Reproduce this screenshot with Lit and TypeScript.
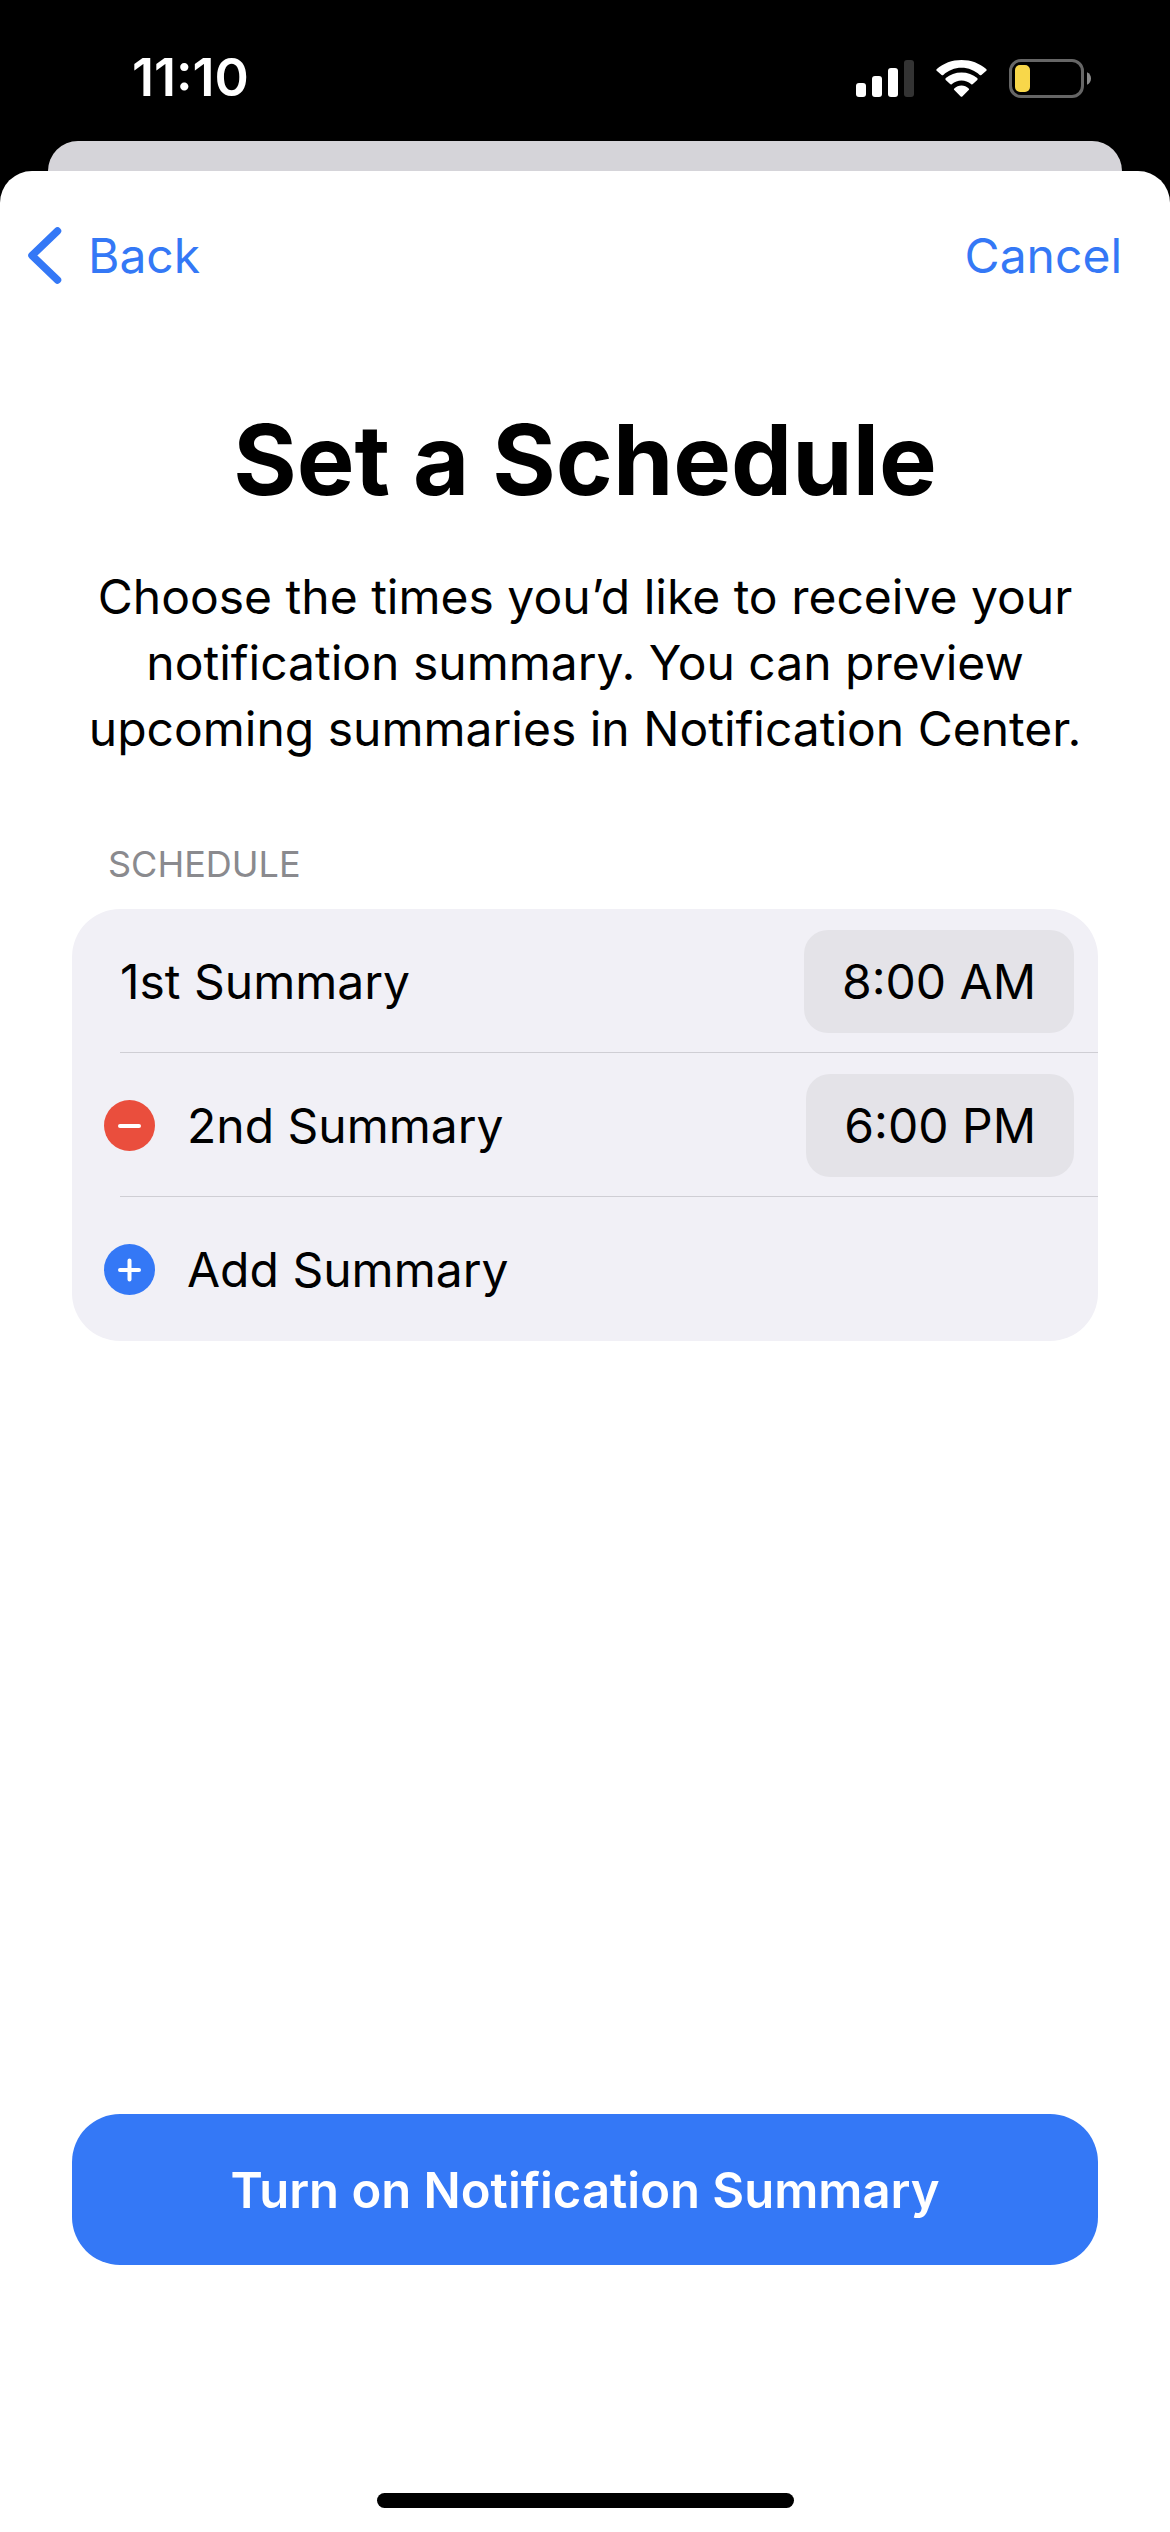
import { LitElement, html, css, svg, nothing } from "lit";
import { customElement, property, state } from "lit/decorators.js";

interface Summary {
  label: string;
  time: string;
  removable: boolean;
}

@customElement("status-bar")
class StatusBar extends LitElement {
  static styles = css`
    :host {
      display: block;
    }
    .bar {
      box-sizing: border-box;
      display: flex;
      align-items: center;
      justify-content: space-between;
      height: 141px;
      padding: 15px 78px 0 132px;
      color: #fff;
    }
    .time {
      font-size: 52px;
      line-height: 66px;
      font-weight: 600;
    }
    .icons {
      display: flex;
      align-items: center;
      gap: 22px;
    }
    svg {
      display: block;
    }
  `;

  render() {
    const bars = [
      [0, 23, 14],
      [16, 16, 21],
      [32, 8, 29],
      [48, 0, 37],
    ];
    return html`
      <div class="bar">
        <span class="time">11:10</span>
        <div class="icons">
          <svg width="58" height="37" viewBox="0 0 58 37" role="img" aria-label="Signal">
            ${bars.map(
              ([x, y, h], i) => svg`<rect x=${x} y=${y} width="10" height=${h} rx="3" fill=${i < 3 ? "#fff" : "#333"} />`
            )}
          </svg>
          <svg width="51" height="37" viewBox="0 0 51 37" role="img" aria-label="Wi-Fi" fill="#fff">
            <path d="M25.500 7.700C32.400 7.700 38.800 10.400 43.700 14.900Q44.600 15.700 45.400 14.900L50.300 10.800Q51.100 10 50.200 9.100C43.600 3.300 34.900 0 25.500 0C16.100 0 7.400 3.300 .8 9.100Q-.1 10 .7 10.800L5.600 14.900Q6.400 15.700 7.300 14.900C12.200 10.400 18.600 7.700 25.500 7.700Z" />
            <path d="M25.500 20.400C29.100 20.400 32.400 21.700 35 23.900Q36 24.900 36.900 24L41.300 19.900Q42.100 19 41.200 18.100C37 14.500 31.500 12.500 25.500 12.500C19.500 12.500 14 14.500 9.800 18.100Q8.900 19 9.700 19.900L14.100 24Q15 24.900 16 23.900C18.600 21.700 21.900 20.400 25.500 20.400Z" />
            <path d="M32.700 28.400Q33.500 29.300 32.700 30.100L26.300 36.400Q25.500 37.200 24.700 36.400L18.300 30.100Q17.500 29.300 18.300 28.400C20.300 26.700 22.800 25.600 25.500 25.600C28.200 25.600 30.700 26.700 32.700 28.400Z" />
          </svg>
          <svg width="83" height="39" viewBox="0 0 83 39" role="img" aria-label="Battery low">
            <rect x="1.500" y="1.500" width="72" height="36" rx="10.500" fill="none" stroke="#666" stroke-width="3" />
            <rect x="6" y="6" width="15" height="27" rx="5" fill="#f8d74a" />
            <path d="M78 13.200C80.600 14.300 82 16.700 82 19.500C82 22.300 80.600 24.700 78 25.800Z" fill="#8a8a8a" />
          </svg>
        </div>
      </div>
    `;
  }
}

@customElement("summary-row")
class SummaryRow extends LitElement {
  @property() label = "";
  @property() time = "";
  @property({ type: Boolean }) removable = false;

  static styles = css`
    :host {
      display: block;
    }
    .row {
      box-sizing: border-box;
      display: flex;
      align-items: center;
      min-height: 144px;
      padding: 0 24px 0 48px;
    }
    .row.removable {
      padding-left: 32px;
    }
    .name {
      flex: 1;
      padding-top: 2px;
      font-size: 48px;
      line-height: 66px;
    }
    button {
      margin: 0;
      padding: 0;
      border: 0;
      background: none;
      color: inherit;
      font: inherit;
      cursor: pointer;
    }
    .remove {
      display: block;
      margin-right: 32px;
    }
    .remove svg {
      display: block;
    }
    .time {
      height: 103px;
      padding: 2px 38px 0;
      border-radius: 24px;
      background: #e4e3e8;
      font-size: 48px;
      line-height: 66px;
    }
  `;

  private remove() {
    this.dispatchEvent(new CustomEvent("remove-summary"));
  }

  render() {
    return html`
      <div class="row ${this.removable ? "removable" : ""}">
        ${this.removable
          ? html`<button class="remove" aria-label="Remove ${this.label}" @click=${this.remove}>
              <svg width="51" height="51" viewBox="0 0 51 51">
                <circle cx="25.500" cy="25.500" r="25.500" fill="#ea4e3d" />
                <path d="M16 26H35" stroke="#fff" stroke-width="4" stroke-linecap="round" />
              </svg>
            </button>`
          : nothing}
        <span class="name" id="name">${this.label}</span>
        <button class="time" aria-describedby="name">${this.time}</button>
      </div>
    `;
  }
}

@customElement("app-root")
class AppRoot extends LitElement {
  @state() private summaries: Summary[] = [
    { label: "1st Summary", time: "8:00 AM", removable: false },
    { label: "2nd Summary", time: "6:00 PM", removable: true },
  ];

  static styles = css`
    :host {
      display: flex;
      flex-direction: column;
      min-height: 100vh;
      background: #000;
      color: #000;
      font-family: Inter, "Liberation Sans", sans-serif;
    }
    button {
      margin: 0;
      padding: 0;
      border: 0;
      background: none;
      color: inherit;
      font: inherit;
      cursor: pointer;
    }
    svg {
      display: block;
    }
    .behind {
      height: 30px;
      margin: 0 48px;
      border-radius: 30px 30px 0 0;
      background: #d5d4d9;
    }
    .sheet {
      flex: 1;
      display: flex;
      flex-direction: column;
      border-radius: 32px 32px 0 0;
      background: #fff;
    }
    .nav {
      display: flex;
      align-items: center;
      justify-content: space-between;
      height: 168px;
      padding: 0 48px 0 28px;
      color: #3478f6;
      font-size: 48px;
      line-height: 66px;
    }
    .back {
      display: flex;
      align-items: center;
      gap: 26px;
    }
    .label {
      display: block;
      padding-top: 2px;
    }
    .content {
      flex: 1;
      display: flex;
      flex-direction: column;
      padding: 61px 72px 0;
    }
    .title {
      margin: 0;
      font-size: 97px;
      line-height: 120px;
      font-weight: 700;
      text-align: center;
    }
    .intro {
      margin: 44px 0 0;
      font-size: 48px;
      line-height: 66px;
      text-align: center;
    }
    .caption {
      margin: 81px 0 24px;
      padding: 0 36px;
      color: #8a8a8e;
      font-size: 36px;
      line-height: 42px;
      font-weight: 400;
    }
    .card {
      margin: 0;
      padding: 0;
      list-style: none;
      border-radius: 48px;
      background: #f1f0f6;
    }
    .item {
      background: linear-gradient(#cfced4, #cfced4) right bottom / calc(100% - 48px) 1px no-repeat;
    }
    .item:last-child {
      background: none;
    }
    .add {
      display: flex;
      align-items: center;
      gap: 32px;
      width: 100%;
      min-height: 144px;
      padding: 0 32px;
      font-size: 48px;
      line-height: 66px;
      text-align: left;
    }
    .primary {
      height: 151px;
      margin-top: auto;
      border-radius: 48px;
      background: #3478f6;
      color: #fff;
      font-size: 49px;
      line-height: 66px;
      font-weight: 600;
    }
    .home {
      width: 417px;
      height: 15px;
      margin: 228px auto 24px;
      border-radius: 8px;
      background: #000;
    }
  `;

  private removeAt(index: number) {
    this.summaries = this.summaries.filter((_, i) => i !== index);
  }

  render() {
    return html`
      <status-bar></status-bar>
      <div class="behind"></div>
      <main class="sheet">
        <nav class="nav">
          <button class="back">
            <svg width="34" height="57" viewBox="0 0 34 57" aria-hidden="true">
              <path d="M29.500 4L4 28.500L29.500 53" fill="none" stroke="#3478f6" stroke-width="7.500" stroke-linecap="round" stroke-linejoin="round" />
            </svg>
            <span class="label">Back</span>
          </button>
          <button><span class="label">Cancel</span></button>
        </nav>
        <section class="content">
          <h1 class="title">Set a Schedule</h1>
          <p class="intro">
            Choose the times you’d like to receive your notification summary. You can preview upcoming summaries in
            Notification Center.
          </p>
          <h2 class="caption">SCHEDULE</h2>
          <ul class="card">
            ${this.summaries.map(
              (s, i) => html`<li class="item">
                <summary-row
                  .label=${s.label}
                  .time=${s.time}
                  .removable=${s.removable}
                  @remove-summary=${() => this.removeAt(i)}
                ></summary-row>
              </li>`
            )}
            <li class="item">
              <button class="add">
                <svg width="51" height="51" viewBox="0 0 51 51" aria-hidden="true">
                  <circle cx="25.500" cy="25.500" r="25.500" fill="#3478f6" />
                  <path d="M16 26H35M25.500 16.500V35.500" stroke="#fff" stroke-width="4" stroke-linecap="round" />
                </svg>
                <span class="label">Add Summary</span>
              </button>
            </li>
          </ul>
          <button class="primary"><span class="label">Turn on Notification Summary</span></button>
        </section>
        <div class="home"></div>
      </main>
    `;
  }
}
